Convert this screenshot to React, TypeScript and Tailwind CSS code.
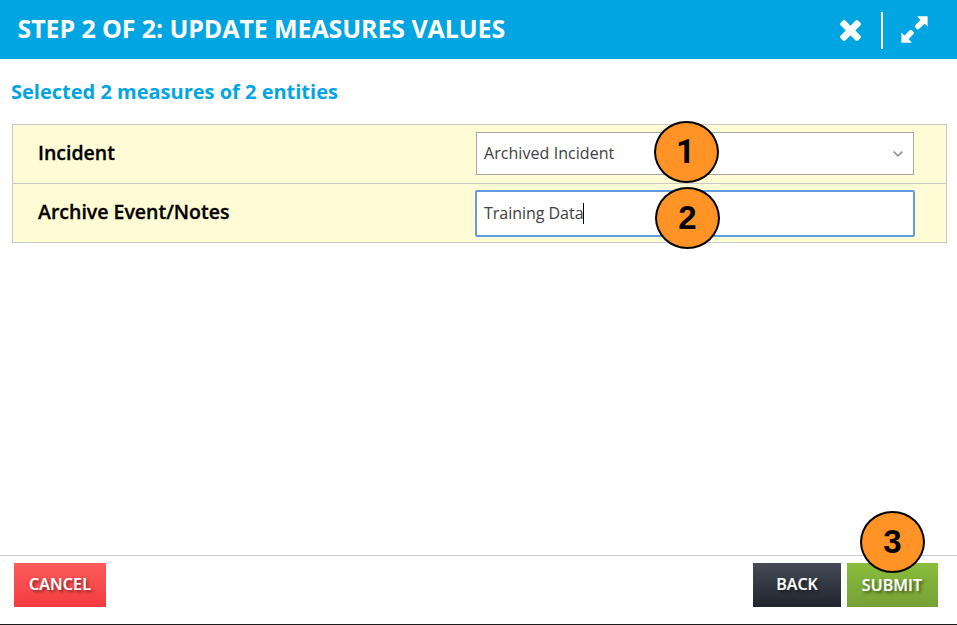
import React from "react";

function Marker({ n, className }: { n: number; className: string }) {
  return (
    <div
      className={`absolute flex h-[62px] w-[65px] items-center justify-center rounded-[50%] border-2 border-black bg-[#ff9326] pb-px text-[33px] leading-none font-bold text-black ${className}`}
    >
      {n}
    </div>
  );
}

function Row({ label, children }: { label: string; children: React.ReactNode }) {
  return (
    <div className="flex h-[59px] items-center border-b border-[#c9c9c9] pr-[32px] pl-[25px]">
      <div className="w-[438px] shrink-0 pb-[2px] text-[19.5px] leading-none font-semibold text-black [-webkit-text-stroke:0.3px]">
        <span>{label}</span>
      </div>
      {children}
    </div>
  );
}

const button =
  "flex h-[44px] items-center justify-center text-base font-semibold text-white [-webkit-text-stroke:0.2px] [text-shadow:2px_2px_3px_rgba(0,0,0,0.5)]";

export default function App() {
  return (
    <div className="relative flex h-[625px] w-[957px] flex-col overflow-hidden border-b border-[#1c1c1c] bg-white font-['Open_Sans','Noto_Sans',sans-serif]">
      <header className="flex h-[59px] shrink-0 items-center bg-[#00a5e1] pr-[29px] pl-[17.5px] text-white">
        <h1 className="grow pb-[2px] text-[25px] leading-none font-bold tracking-[-0.1px]">
          STEP 2 OF 2: UPDATE MEASURES VALUES
        </h1>
        <svg className="mt-[2px] h-[21px] w-[21px]" viewBox="302 366 1188 1188" fill="currentColor">
          <path d="M1490 1322q0 40-28 68l-136 136q-28 28-68 28t-68-28l-294-294-294 294q-28 28-68 28t-68-28l-136-136q-28-28-28-68t28-68l294-294-294-294q-28-28-28-68t28-68l136-136q28-28 68-28t68 28l294 294 294-294q28-28 68-28t68 28l136 136q28 28 28 68t-28 68l-294 294 294 294q28 28 28 68z" />
        </svg>
        <div className="mt-[2px] ml-[20px] h-[37px] w-[2px] bg-white" />
        <svg className="ml-[18px] h-[27px] w-[27px]" viewBox="0 0 27 27" fill="currentColor">
          <path d="M16.2 0.3H26.6V10.6L23.6 7.7L17.9 13Q16.8 13.8 15.8 12.9L14.2 11.3Q13.4 10.3 14.3 9.3L19.5 4Z" />
          <path d="M10.8 26.8H0.4V16.5L3.4 19.4L8.8 14.3Q9.9 13.4 10.9 14.3L12.6 15.9Q13.4 16.9 12.5 17.9L7.6 23.1Z" />
        </svg>
      </header>

      <main className="flex grow flex-col pr-[10px] pl-[12px]">
        <h2 className="-ml-px flex h-[65px] items-center text-[20px] leading-none font-bold text-[#00a5e1]">
          <span>Selected 2 measures of 2 entities</span>
        </h2>
        <section className="border border-b-0 border-[#c9c9c9] bg-[#fffbd4]">
          <Row label="Incident">
            <div className="mb-[2px] flex h-[43px] w-[438px] shrink-0 items-center justify-between border border-[#a6a6a6] bg-white pr-[10px] pl-[7px] text-[16px] tracking-[0.06px] text-[#404040]">
              <span>Archived Incident</span>
              <svg className="mt-[2px] h-[6px] w-[10px]" viewBox="0 0 10 6" fill="none" stroke="#8b95a3" strokeWidth="1.6">
                <path d="M0.7 0.7L5 4.8L9.3 0.7" />
              </svg>
            </div>
          </Row>
          <Row label="Archive Event/Notes">
            <div className="-mr-px -ml-px flex h-[47px] w-[440px] shrink-0 items-center rounded-[2px] border-2 border-[#629be0] bg-white pl-[7px] text-[16px] tracking-[-0.03px] text-[#404040]">
              <span>Training Data</span>
              <span className="-ml-px h-[21px] w-px bg-black" />
            </div>
          </Row>
        </section>
      </main>

      <footer className="flex h-[69px] shrink-0 border-t border-[#c9c9c9] pt-[7px] pr-[19px] pl-[14px]">
        <button className={`${button} w-[92px] bg-linear-to-b from-[#fc5b5b] to-[#f4393e] pb-[2px] tracking-[0.2px]`}>
          <span>CANCEL</span>
        </button>
        <button className={`${button} ml-auto w-[88px] bg-linear-to-b from-[#454c57] to-[#20242d] pb-[2px]`}>
          <span>BACK</span>
        </button>
        <button className={`${button} ml-[6px] w-[91px] bg-linear-to-b from-[#8abd3c] to-[#76a136] pr-px tracking-[0.1px]`}>
          <span>SUBMIT</span>
        </button>
      </footer>

      <Marker n={1} className="top-[121px] left-[654px] pr-[2px] font-['Roboto',sans-serif]" />
      <Marker n={2} className="top-[187px] left-[655px] font-['Liberation_Sans',Arial,sans-serif]" />
      <Marker n={3} className="top-[511px] left-[860px] font-['Liberation_Sans',Arial,sans-serif]" />
    </div>
  );
}
